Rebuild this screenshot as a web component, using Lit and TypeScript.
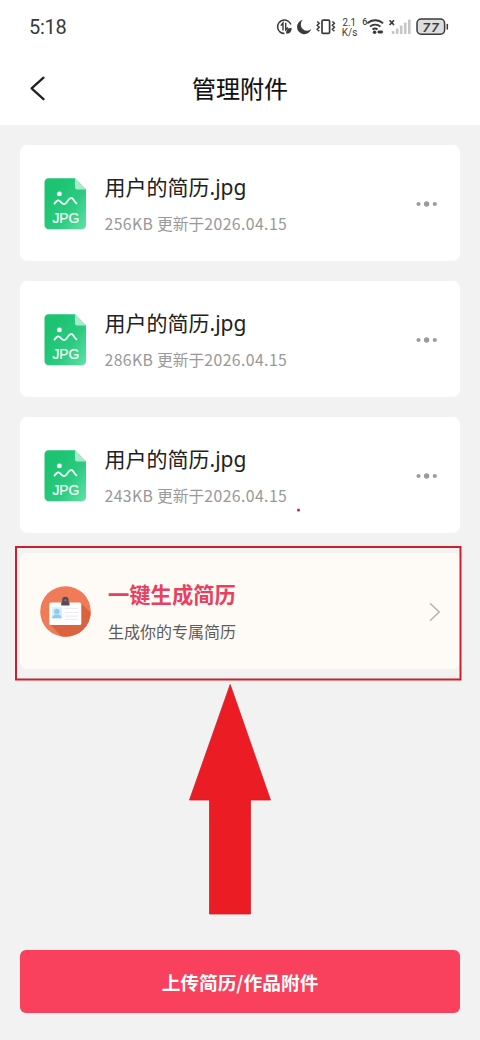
import { LitElement, html, css, svg } from "lit";
import { customElement, property } from "lit/decorators.js";

interface Attachment {
  name: string;
  ext: string;
  size: string;
  date: string;
}

const FILES: Attachment[] = [
  { name: "用户的简历", ext: ".jpg", size: "256KB", date: "2026.04.15" },
  { name: "用户的简历", ext: ".jpg", size: "286KB", date: "2026.04.15" },
  { name: "用户的简历", ext: ".jpg", size: "243KB", date: "2026.04.15" },
];

@customElement("status-bar")
class StatusBar extends LitElement {
  static styles = css`
    :host {
      display: flex;
      justify-content: space-between;
      height: 52px;
      padding: 0 30px 0 29px;
      box-sizing: border-box;
      color: #3a3a3a;
    }
    .time {
      font: 400 20px/54px Roboto, sans-serif;
      letter-spacing: -0.3px;
    }
    svg {
      display: block;
      width: 180px;
      height: 52px;
      font-family: Roboto, sans-serif;
    }
  `;

  render() {
    const bars = [3, 5.5, 8.5, 11.5, 14.5];
    return html`
      <span class="time">5:18</span>
      <svg viewBox="270 0 180 52" fill="none" stroke="#3a3a3a">
        <path d="M290.8 24.5A6.8 6.8 0 1 0 284.5 33.6" stroke-width="1.5" />
        <path d="M280.8 25.600l2.200-2.600V30.500M285.700 22.800v7l2.300-2.400" stroke-width="1.4" />
        <path d="M286 33.5c0-4 2-5.5 5.6-5.7 0 4-1.8 6.2-5.6 5.7z" fill="#3a3a3a" stroke="none" />
        <path d="M302.8 19.800a7.300 7.300 0 1 0 8.500 9.300 6.300 6.300 0 0 1-8.500-9.300z" fill="#3a3a3a" stroke="none" />
        <rect x="322" y="20.2" width="7.6" height="13.2" rx="1.2" stroke-width="1.7" />
        <path d="M317.2 21.5l2 1.8-2 2 2 2-2 2 2 2M332.4 21.5l2 1.8-2 2 2 2-2 2 2 2" stroke-width="1.5" />
        <g fill="#3a3a3a" stroke="none">
          <text x="342.5" y="25.8" font-size="10" textLength="13.5" lengthAdjust="spacingAndGlyphs">2.1</text>
          <text x="341.8" y="35.6" font-size="10" textLength="15.5" lengthAdjust="spacingAndGlyphs">K/s</text>
          <text x="362.2" y="25.4" font-size="9" font-weight="500">6</text>
          <circle cx="374.6" cy="32.2" r="1.8" />
          <rect x="377.5" y="30.6" width="5.5" height="2.8" rx="1.3" />
          ${bars.map(
            (h, i) => svg`<rect x=${391.8 + i * 4.05} y=${34 - h} width="2.6" height=${h} rx="0.8" fill="#c6c6c6" />`
          )}
        </g>
        <path d="M367.3 23.4a11.5 11.5 0 0 1 15.8 0M370 26.6a7.6 7.6 0 0 1 10.4 0M372.5 29.5a4 4 0 0 1 5 0" stroke-width="1.8" />
        <path d="M389.6 20.2l4.4 4.8M394 20.2l-4.4 4.8" stroke-width="1.7" />
        <rect x="417" y="19" width="27.6" height="15.2" rx="4.2" fill="#dedede" stroke-width="1.5" />
        <path d="M447.3 24.5v4.4" stroke-width="1.5" stroke-linecap="round" />
        <text x="422.600" y="31.5" textLength="16" font-size="13.500" font-weight="500" font-style="italic" fill="#3a3a3a" stroke="#3a3a3a" stroke-width=".2">77</text>
      </svg>
    `;
  }
}

@customElement("file-card")
class FileCard extends LitElement {
  @property({ attribute: false }) file!: Attachment;

  static styles = css`
    :host {
      display: flex;
      align-items: center;
      height: 116px;
      box-sizing: border-box;
      padding: 0 21px 0 24px;
      border-radius: 7px;
      background: #fff;
    }
    .icon {
      flex: none;
      width: 43px;
      height: 52px;
      margin-top: 1px;
    }
    .info {
      flex: 1;
      margin-left: 17.5px;
      white-space: nowrap;
    }
    .name {
      font-size: 21px;
      line-height: 30px;
      color: #222;
    }
    .ext {
      font: 400 21px/30px "Noto Sans", sans-serif;
    }
    .meta {
      margin-top: 10px;
      font-size: 15.8px;
      line-height: 24px;
      color: #999;
    }
    .size {
      letter-spacing: 0.4px;
    }
    .date {
      letter-spacing: 0.4px;
    }
    .more {
      flex: none;
      width: 24px;
      height: 8px;
      margin-top: 1px;
    }
  `;

  render() {
    const f = this.file;
    return html`
      <svg class="icon" viewBox="0 0 43 52">
        <defs>
          <linearGradient id="sheet" x1="0.2" y1="0.3" x2="1" y2="1">
            <stop offset="0" stop-color="#1dc373" />
            <stop offset="0.5" stop-color="#2dcb80" />
            <stop offset="1" stop-color="#5de3a6" />
          </linearGradient>
        </defs>
        <path d="M4.5 .3H31L42 11.5V47a4.3 4.3 0 0 1-4.3 4.3H4.8A4.3 4.3 0 0 1 .5 47V4.5A4.3 4.3 0 0 1 4.5 .3z" fill="url(#sheet)" />
        <path d="M31 .3L42 11.5H33a2 2 0 0 1-2-2z" fill="#a9e9cc" />
        <circle cx="15.4" cy="15.9" r="2.4" fill="#fff" />
        <path d="M10.5 25.6c2-2.6 3.7-4.6 5.9-2 2.5 3 4.2 3.6 6.5.3 2.5-3.700 4.600-5.300 6.500-2.300.8 1.400 1.700 2.600 3 3.700" fill="none" stroke="#f1fff8" stroke-width="1.8" stroke-linecap="round" stroke-linejoin="round" />
        <text x="8.4" y="44.7" textLength="27" lengthAdjust="spacingAndGlyphs" fill="#effff7" stroke="#effff7" stroke-width=".2" font-family="Liberation Sans, sans-serif" font-size="14">JPG</text>
      </svg>
      <div class="info">
        <div class="name">${f.name}<span class="ext">${f.ext}</span></div>
        <div class="meta"><span class="size">${f.size}</span> 更新于<span class="date">${f.date}</span></div>
      </div>
      <svg class="more" viewBox="0 0 24 8" fill="#9c9c9c">
        <circle cx="3.5" cy="4" r="2.1" />
        <circle cx="11.6" cy="4" r="2.7" />
        <circle cx="19.8" cy="4" r="2.1" />
      </svg>
    `;
  }
}

@customElement("generate-card")
class GenerateCard extends LitElement {
  static styles = css`
    :host {
      display: flex;
      align-items: center;
      height: 116px;
      box-sizing: border-box;
      padding: 0 19px 0 20px;
      border-radius: 7px;
      background: #fefaf5;
    }
    .badge {
      flex: none;
      width: 51px;
      height: 51px;
      margin-top: 1px;
    }
    .info {
      flex: 1;
      margin-left: 17px;
      padding-bottom: 1px;
      white-space: nowrap;
    }
    .title {
      font-size: 21.3px;
      font-weight: 700;
      line-height: 30px;
      color: #e8405f;
    }
    .sub {
      margin-top: 10px;
      font-size: 16px;
      line-height: 24px;
      color: #5e5c5a;
    }
    .arrow {
      flex: none;
      width: 12px;
      height: 20px;
      margin-top: 1px;
    }
  `;

  render() {
    return html`
      <svg class="badge" viewBox="0 0 51 51">
        <defs>
          <clipPath id="disc"><circle cx="25.5" cy="25.5" r="25.3" /></clipPath>
        </defs>
        <g clip-path="url(#disc)">
          <rect width="51" height="51" fill="#f07b58" />
          <path d="M41 17L62 38V60H30L10 38z" fill="#d9633f" />
        </g>
        <rect x="9.3" y="16.5" width="32" height="22.5" rx="1.6" fill="#fdfdfe" />
        <rect x="11.8" y="21.3" width="10.2" height="11" fill="#d5effb" />
        <circle cx="16.9" cy="25.4" r="2.7" fill="#8accee" />
        <path d="M12 32.3c.4-2.7 2-3.6 3.7-3.9h2.4c1.7.3 3.3 1.2 3.7 3.9z" fill="#8accee" />
        <path d="M25 22.5h13M25 26.5h13M25 30.2h13M25 33.5h13" stroke="#e6e8ec" stroke-width=".8" />
        <path d="M22.2 16.2v-2.2a3.2 3.2 0 0 1 6.4 0v2.2h.9v3.4h-8.3v-3.4z" fill="#514e5a" />
        <circle cx="25.4" cy="14.3" r="1.1" fill="#a5705f" />
      </svg>
      <div class="info">
        <div class="title">一键生成简历</div>
        <div class="sub">生成你的专属简历</div>
      </div>
      <svg class="arrow" viewBox="0 0 12 20" fill="none" stroke="#b5b2ae" stroke-width="1.5" stroke-linecap="round">
        <path d="M1.5 1.7L10.2 10L1.5 18.3" />
      </svg>
    `;
  }
}

@customElement("app-root")
class AppRoot extends LitElement {
  static styles = css`
    :host {
      position: relative;
      display: flex;
      flex-direction: column;
      width: 480px;
      height: 1040px;
      overflow: hidden;
      background: #f2f2f2;
      font-family: "Noto Sans CJK SC", sans-serif;
    }
    .top {
      height: 125px;
      background: #fff;
    }
    .nav {
      display: grid;
      grid-template-columns: 60px 1fr 60px;
      align-items: center;
      height: 73px;
    }
    .back {
      width: 18px;
      height: 28px;
      margin-left: 29px;
    }
    .heading {
      margin: 0 0 1px;
      text-align: center;
      font-size: 24px;
      font-weight: 400;
      line-height: 36px;
      color: #111;
      -webkit-text-stroke: 0.15px #111;
    }
    .list {
      display: flex;
      flex-direction: column;
      gap: 20px;
      flex: 1;
      padding: 20px 20px 0;
    }
    .upload {
      height: 63px;
      margin: 0 20px 27px;
      border: 0;
      padding: 0;
      border-radius: 6px;
      background: #f9415d;
      color: #fff;
      font: 700 18.7px/63px "Noto Sans CJK SC", sans-serif;
      text-align: center;
    }
    .marks {
      position: absolute;
      inset: 0;
      width: 480px;
      height: 1040px;
      pointer-events: none;
    }
  `;

  render() {
    return html`
      <div class="top">
        <status-bar></status-bar>
        <div class="nav">
          <svg class="back" viewBox="0 0 18 28" fill="none" stroke="#222" stroke-width="2.3" stroke-linecap="round" stroke-linejoin="round">
            <path d="M14.5 2.7L2.6 13.3L14.5 24.2" />
          </svg>
          <h1 class="heading">管理附件</h1>
        </div>
      </div>
      <div class="list">
        ${FILES.map((f) => html`<file-card .file=${f}></file-card>`)}
        <generate-card></generate-card>
      </div>
      <button class="upload">上传简历/作品附件</button>
      <svg class="marks" viewBox="0 0 480 1040">
        <rect x="16" y="547" width="444.5" height="132.5" fill="none" stroke="#c9202a" stroke-width="2" />
        <path d="M230.2 684.5L270.5 800H250.5V914H209.5V800H189.5z" fill="#ec1c24" stroke="#d21f28" stroke-width=".8" stroke-linejoin="round" />
        <rect x="297.2" y="508.8" width="2.6" height="2.6" fill="#c9202a" />
      </svg>
    `;
  }
}
